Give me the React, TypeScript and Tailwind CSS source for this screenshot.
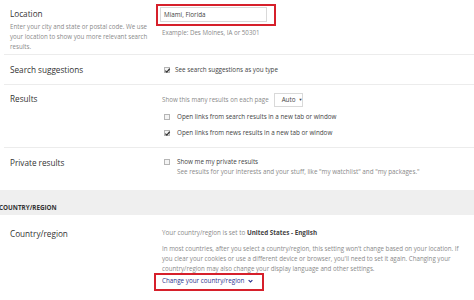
import React from "react";

function Box({ checked }: { checked?: boolean }) {
  return (
    <span className="relative inline-flex w-[6px] h-[6px] shrink-0 border border-[#b5b5b5] bg-[#f4f4f4] items-center justify-center">
      {checked && (
        <svg viewBox="0 0 8 8" className="absolute w-[7px] h-[7px] left-[-1px] top-[-1px]">
          <path d="M1.5 4.2 L3.2 5.8 L6.5 2" fill="none" stroke="#333" strokeWidth="1.4" />
        </svg>
      )}
    </span>
  );
}

export default function App() {
  return (
    <div
      className="w-[474px] h-[300px] overflow-hidden bg-white text-[#333]"
      style={{ fontFamily: '"Open Sans", "Noto Sans", sans-serif' }}
    >
      {/* Location */}
      <div className="flex h-[55px] ml-[4px] border-b border-[#ececec]">
        <div className="w-[148px] pl-[6px] pt-[8px]">
          <div className="text-[8.2px] leading-[12px] text-[#333]">Location</div>
          <div className="mt-[2px] w-[140px] text-[6.2px] leading-[10px] text-[#8a8a8a]">
            Enter your city and state or postal code. We use your location to show you more relevant search results.
          </div>
        </div>
        <div className="flex-1 pt-[4px] pl-[4px]">
          <div className="w-[120px] h-[22px] border-2 border-[#d6202b] pl-[2px] pt-[1px]">
            <div className="w-[107px] h-[15px] border border-[#d9d9d9] bg-white flex items-center pl-[3px] text-[6.3px] text-[#444]">
              Miami, Florida
            </div>
          </div>
          <div className="mt-[2px] pl-[6px] text-[6.2px] leading-[10px] text-[#8a8a8a]">
            Example: Des Moines, IA or 50301
          </div>
        </div>
      </div>

      {/* Search suggestions */}
      <div className="flex h-[30px] ml-[4px] border-b border-[#ececec] items-center">
        <div className="w-[148px] pl-[6px] text-[8.2px] leading-[13px]">Search suggestions</div>
        <div className="flex items-center pl-[12px] gap-[5px] text-[6.3px] text-[#444]">
          <Box checked />
          <span>See search suggestions as you type</span>
        </div>
      </div>

      {/* Results */}
      <div className="flex h-[63px] ml-[4px] border-b border-[#ececec]">
        <div className="w-[148px] pl-[6px] pt-[7px] text-[8.2px] leading-[13px]">Results</div>
        <div className="flex flex-col pl-[10px] pt-[8px]">
          <div className="flex items-center gap-[5px]">
            <span className="text-[6.2px] text-[#8a8a8a]">Show this many results on each page</span>
            <span className="flex items-center h-[14px] w-[29px] border border-[#d9d9d9] pl-[7px] gap-[3px] text-[6.3px] text-[#444]">
              Auto <span className="text-[4px]">▼</span>
            </span>
          </div>
          <div className="flex items-center gap-[7px] pl-[2px] mt-[5px] text-[6.3px] text-[#444] h-[10px]">
            <Box />
            <span>Open links from search results in a new tab or window</span>
          </div>
          <div className="flex items-center gap-[7px] pl-[2px] mt-[6px] text-[6.3px] text-[#444] h-[10px]">
            <Box checked />
            <span>Open links from news results in a new tab or window</span>
          </div>
        </div>
      </div>

      {/* Private results */}
      <div className="flex h-[42px] ml-[4px]">
        <div className="w-[148px] pl-[6px] pt-[8px] text-[8.2px] leading-[13px]">Private results</div>
        <div className="flex pl-[12px] pt-[9px] gap-[7px]">
          <div className="flex pt-[2px]"><Box /></div>
          <div className="text-[6.3px] leading-[10px]">
            <div className="text-[#444]">Show me my private results</div>
            <div className="text-[#8a8a8a]">See results for your interests and your stuff, like "my watchlist" and "my packages."</div>
          </div>
        </div>
      </div>

      {/* Country band */}
      <div className="h-[25px] bg-[#efefef] flex items-end pb-[2px]">
        <span className="ml-[-1px] text-[6.3px] font-bold text-[#333] leading-[10px]">COUNTRY/REGION</span>
      </div>

      {/* Country/region */}
      <div className="flex ml-[4px]">
        <div className="w-[148px] pl-[6px] pt-[12px] text-[8.2px] leading-[13px]">Country/region</div>
        <div className="flex-1 pt-[13px] pl-[10px] pr-[6px]">
          <div className="text-[6.3px] leading-[10px] text-[#8a8a8a]">
            Your country/region is set to <b className="text-[#444]">United States - English</b>
          </div>
          <div className="mt-[6px] text-[6.2px] leading-[10px] text-[#8a8a8a]">
            In most countries, after you select a country/region, this setting won't change based on your location. If you clear your cookies or use a different device or browser, you'll need to set it again. Changing your country/region may also change your display language and other settings.
          </div>
          <div className="ml-[-8px] mt-[-1px] w-[110px] h-[18px] border-2 border-[#d6202b] flex items-center pl-[6px] gap-[4px] pb-[3px] text-[6.3px] text-[#2d3590]">
            <span>Change your country/region</span>
            <svg viewBox="0 0 8 6" className="w-[5px] h-[4px]">
              <path d="M1 1.5 L4 4.5 L7 1.5" fill="none" stroke="#2d3590" strokeWidth="1.8" />
            </svg>
          </div>
        </div>
      </div>
    </div>
  );
}
